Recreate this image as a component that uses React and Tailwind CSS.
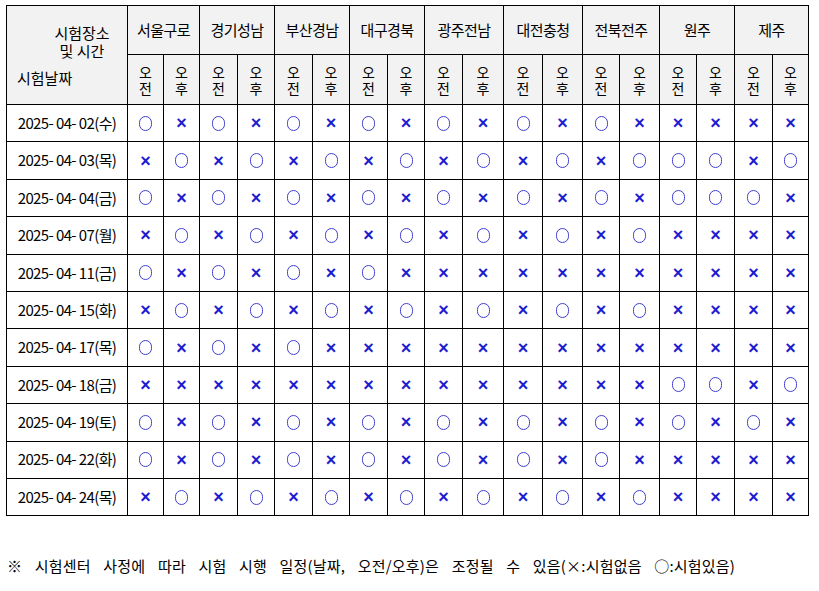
import React from "react";

const regions = ["서울구로", "경기성남", "부산경남", "대구경북", "광주전남", "대전충청", "전북전주", "원주", "제주"];

// O = 시험있음, X = 시험없음 (오전/오후 pairs per region)
const rows = [
  ["2025- 04- 02(수)", "OXOXOXOXOXOXOXXXXX"],
  ["2025- 04- 03(목)", "XOXOXOXOXOXOXOOOXO"],
  ["2025- 04- 04(금)", "OXOXOXOXOXOXOXOOOX"],
  ["2025- 04- 07(월)", "XOXOXOXOXOXOXOXXXX"],
  ["2025- 04- 11(금)", "OXOXOXOXXXXXXXXXXX"],
  ["2025- 04- 15(화)", "XOXOXOXOXOXOXOXXXX"],
  ["2025- 04- 17(목)", "OXOXOXXXXXXXXXXXXX"],
  ["2025- 04- 18(금)", "XXXXXXXXXXXXXXOOXO"],
  ["2025- 04- 19(토)", "OXOXOXOXOXOXOXOXOX"],
  ["2025- 04- 22(화)", "OXOXOXOXOXOXOXXXXX"],
  ["2025- 04- 24(목)", "XOXOXOXOXOXOXOXXXX"],
];

const font = { fontFamily: '"Noto Sans CJK KR", "Noto Sans", sans-serif' };

function Mark({ v }) {
  if (v === "O") {
    return <span className="block w-[13px] h-[15px] rounded-full border border-[#4040d0]" />;
  }
  return (
    <span className="text-[18px] leading-none font-bold text-[#1c1cd0]" style={{ fontFamily: '"Liberation Sans", sans-serif' }}>
      ×
    </span>
  );
}

export default function App() {
  return (
    <div className="bg-white w-[819px] h-[591px] pl-[6px] pt-[5px] text-black" style={font}>
      <div className="inline-grid bg-black gap-px p-px grid-cols-[120px_35px_35px_37px_36px_37px_36px_37px_36px_37px_40px_38px_39px_36px_39px_36px_37px_37px_35px] grid-rows-[48px_49px_repeat(11,36.4px)]">
        <div className="row-span-2 bg-[#f2f2f2] flex flex-col text-[15px] leading-[18px]">
          <div className="pt-[18px] pl-[40px] text-center w-[110px]">
            <div>시험장소</div>
            <div>및 시간</div>
          </div>
          <div className="pl-[10px] pt-[9px]">시험날짜</div>
        </div>
        {regions.map((r) => (
          <div key={r} className="col-span-2 bg-[#f2f2f2] flex items-center justify-center text-[15px] tracking-[-0.5px]">
            {r}
          </div>
        ))}
        {regions.map((r) =>
          ["전", "후"].map((t) => (
            <div key={r + t} className="bg-[#f2f2f2] flex flex-col items-center justify-center text-[14px] leading-[16px]">
              <span>오</span>
              <span>{t}</span>
            </div>
          ))
        )}
        {rows.map(([d, marks]) => (
          <React.Fragment key={d}>
            <div className="bg-white flex items-center justify-center text-[15px] tracking-[-0.6px] whitespace-pre">{d}</div>
            {marks.split("").map((m, i) => (
              <div key={i} className="bg-white flex items-center justify-center">
                <Mark v={m} />
              </div>
            ))}
          </React.Fragment>
        ))}
      </div>
      <p className="mt-[40px] pl-px text-[15px] leading-[20px] [word-spacing:9px] tracking-[0.2px] whitespace-pre">
        ※ 시험센터 사정에 따라 시험 시행 일정(날짜, 오전/오후)은 조정될 수 있음(×:시험없음 ○:시험있음)
      </p>
    </div>
  );
}
